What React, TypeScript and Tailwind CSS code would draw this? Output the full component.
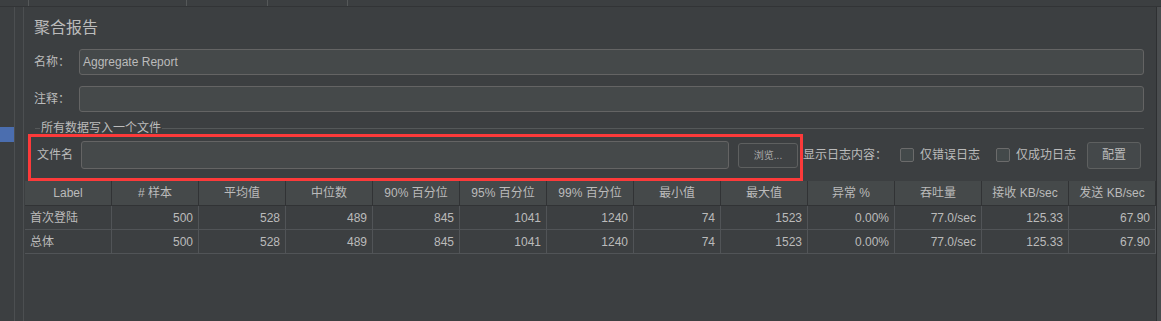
import React from "react";

const cols = [
  "Label",
  "# 样本",
  "平均值",
  "中位数",
  "90% 百分位",
  "95% 百分位",
  "99% 百分位",
  "最小值",
  "最大值",
  "异常 %",
  "吞吐量",
  "接收 KB/sec",
  "发送 KB/sec",
];

const rows = [
  ["首次登陆", "500", "528", "489", "845", "1041", "1240", "74", "1523", "0.00%", "77.0/sec", "125.33", "67.90"],
  ["总体", "500", "528", "489", "845", "1041", "1240", "74", "1523", "0.00%", "77.0/sec", "125.33", "67.90"],
];

const Field = ({ label, value }: { label: string; value?: string }) => (
  <div className="flex items-center h-[26px]">
    <span className="w-[45px] shrink-0 whitespace-nowrap text-[12px] text-[#bbbbbb]">{label}</span>
    <div className="flex-1 h-[26px] bg-[#45494a] border border-[#646464] rounded-[3px] flex items-center pl-[3px] text-[12px] text-[#bbbbbb]">
      {value}
    </div>
  </div>
);

const Check = ({ label }: { label: string }) => (
  <div className="flex items-center shrink-0 whitespace-nowrap">
    <span className="w-[14px] h-[14px] shrink-0 border border-[#6b6b6b] bg-[#43494a] rounded-[2px]" />
    <span className="ml-[6px] w-[60px] text-[12px] text-[#bbbbbb]">{label}</span>
  </div>
);

export default function App() {
  return (
    <div
      className="w-[1161px] h-[321px] bg-[#3c3f41] flex flex-col overflow-hidden"
      style={{ fontFamily: '"Liberation Sans", "Noto Sans CJK SC", sans-serif' }}
    >
      {/* top tab strip */}
      <div className="h-[7px] shrink-0 border-b border-[#323436] flex">
        <div className="w-[29px] border-r border-[#555859]" />
        <div className="w-[158px] border-r border-[#555859]" />
        <div className="w-[81px] border-r border-[#555859]" />
        <div className="w-[80px] border-r border-[#555859]" />
      </div>

      <div className="flex flex-1 min-h-0">
        <div className="w-[15px] shrink-0 border-r border-[#4c4f51] pt-[120px]">
          <div className="h-[15px] w-[14px] bg-[#4b6eaf]" />
        </div>
        <div className="w-[9px] shrink-0 border-r border-[#4c4f51]" />

        <div className="relative flex-1 min-w-0 flex flex-col">
          <div className="pl-[10px] pr-[12px] pt-[10px] flex flex-col">
            <div className="h-[22px] text-[16px] leading-[22px] text-[#bbbbbb]">聚合报告</div>
            <div className="mt-[10px]">
              <Field label="名称：" value="Aggregate Report" />
            </div>
            <div className="mt-[11px]">
              <Field label="注释：" />
            </div>

            <div className="mt-[10px] h-[12px] flex items-center">
              <span className="ml-[1px] w-[5px] h-px bg-[#555859]" />
              <span className="px-[1px] whitespace-nowrap text-[12px] leading-[12px] text-[#bbbbbb]">所有数据写入一个文件</span>
              <span className="flex-1 h-px bg-[#555859]" />
            </div>

            <div className="mt-[7px] h-[28px] flex items-center pl-[3px] whitespace-nowrap">
              <span className="w-[40px] shrink-0 text-[12px] text-[#bbbbbb]">文件名</span>
              <div className="ml-[4px] w-[648px] shrink-0 h-[28px] bg-[#45494a] border border-[#646464] rounded-[3px]" />
              <button className="ml-[9px] w-[60px] shrink-0 h-[25px] bg-[#3f4244] border border-[#5e6060] rounded-[3px] text-[10px] text-[#a9a9a9]">
                浏览...
              </button>
              <span className="ml-[5px] w-[97px] shrink-0 text-[12px] text-[#bbbbbb]">显示日志内容：</span>
              <Check label="仅错误日志" />
              <div className="ml-[16px]">
                <Check label="仅成功日志" />
              </div>
              <button className="ml-[11px] w-[54px] shrink-0 h-[27px] bg-[#44484a] border border-[#5e6060] rounded-[3px] text-[12px] text-[#bbbbbb]">
                配置
              </button>
            </div>
          </div>

          {/* table */}
          <div className="mt-[12px] ml-[1px] w-[1131px] grid grid-cols-[repeat(13,87px)] text-[12px] text-[#bbbbbb] whitespace-nowrap">
            {cols.map((c) => (
              <div
                key={c}
                className="h-[25px] bg-[#45494a] border-r border-b border-[#313335] flex items-center justify-center"
              >
                {c}
              </div>
            ))}
            {rows.map((r, ri) =>
              r.map((v, i) => (
                <div
                  key={ri + "-" + i}
                  className={
                    "h-[24px] border-r border-b border-[#515457] flex items-center px-[5px] " +
                    (i === 0 ? "justify-start" : "justify-end")
                  }
                >
                  {v}
                </div>
              ))
            )}
          </div>

          {/* highlight annotation */}
          <div className="absolute left-[4px] top-[127px] w-[775px] h-[47px] border-[3px] border-[#fc3a3a] pointer-events-none" />
        </div>

        <div className="w-[5px] shrink-0 border-l border-[#2e3032] bg-[#4a4d4f]" />
      </div>
    </div>
  );
}
